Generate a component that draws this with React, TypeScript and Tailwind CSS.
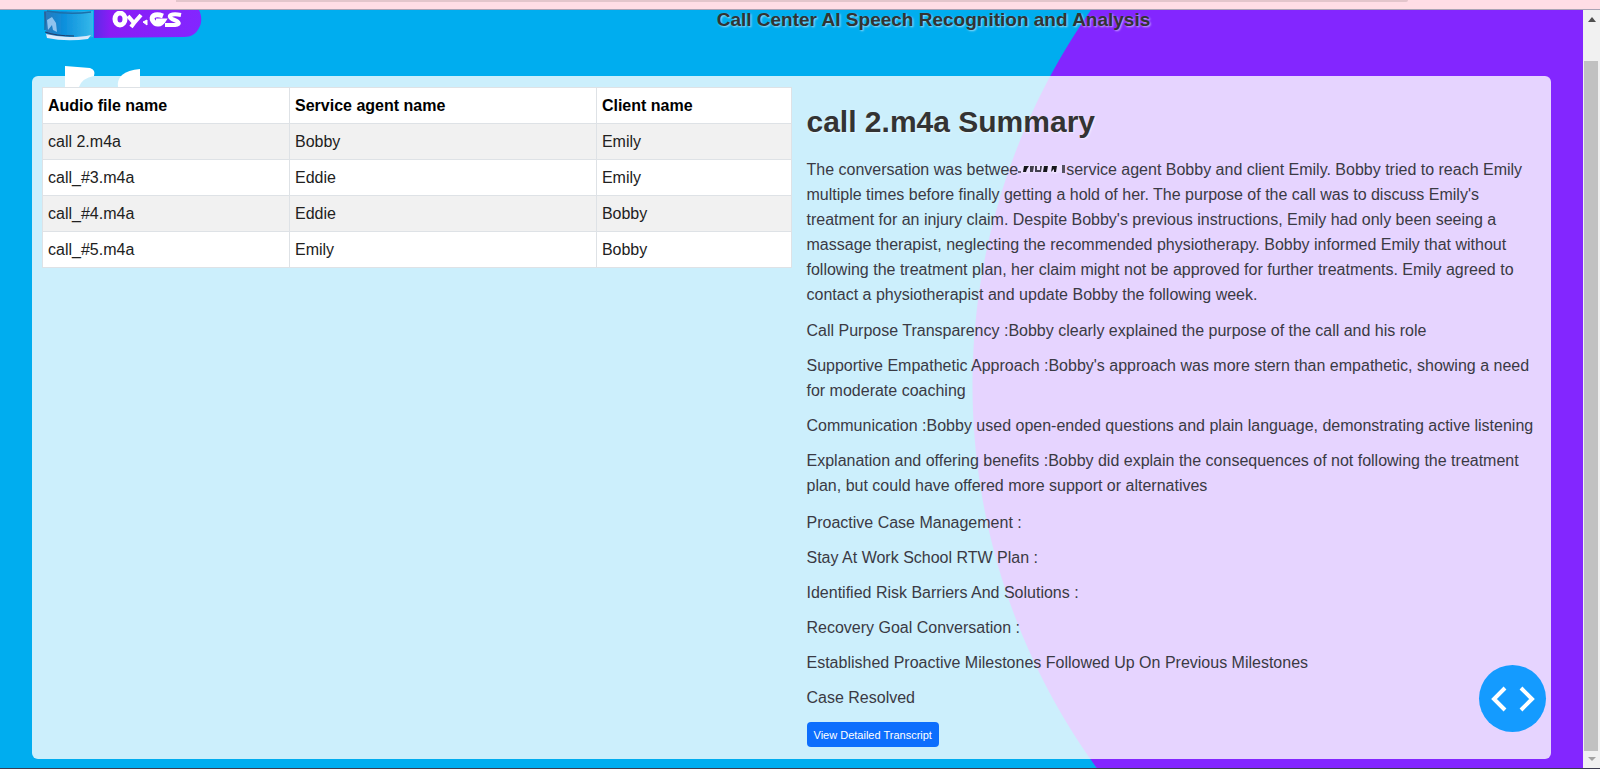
const calls = [
  { file: 'call 2.m4a', agent: 'Bobby', client: 'Emily' },
  { file: 'call_#3.m4a', agent: 'Eddie', client: 'Emily' },
  { file: 'call_#4.m4a', agent: 'Eddie', client: 'Bobby' },
  { file: 'call_#5.m4a', agent: 'Emily', client: 'Bobby' },
];

const reviewed = [
  'Call Purpose Transparency :Bobby clearly explained the purpose of the call and his role',
  "Supportive Empathetic Approach :Bobby's approach was more stern than empathetic, showing a need for moderate coaching",
  'Communication :Bobby used open-ended questions and plain language, demonstrating active listening',
  'Explanation and offering benefits :Bobby did explain the consequences of not following the treatment plan, but could have offered more support or alternatives',
];

const pending = [
  'Proactive Case Management :',
  'Stay At Work School RTW Plan :',
  'Identified Risk Barriers And Solutions :',
  'Recovery Goal Conversation :',
  'Established Proactive Milestones Followed Up On Previous Milestones',
  'Case Resolved',
];

function Logo() {
  return (
    <svg className="h-8 w-40 shrink-0" viewBox="0 0 160 32" aria-hidden="true">
      <defs>
        <linearGradient id="pill" x1="0" x2="1">
          <stop offset="0" stopColor="#5b2be8" />
          <stop offset="0.15" stopColor="#8a1cf5" />
          <stop offset="1" stopColor="#8326ff" />
        </linearGradient>
        <linearGradient id="glass" x1="0" x2="1">
          <stop offset="0" stopColor="#2b76b8" />
          <stop offset="0.4" stopColor="#0d8fdc" />
          <stop offset="1" stopColor="#35b9ea" />
        </linearGradient>
        <filter id="soft">
          <feGaussianBlur stdDeviation="0.5" />
        </filter>
      </defs>
      <g filter="url(#soft)">
        <path d="M0 1H49V27Q26 31 3 28Z" fill="url(#glass)" />
        <path d="M2 24Q14 27 26 27Q38 27 47 25L44 29Q22 32 3 28Z" fill="#d9e9fa" />
        <path d="M1 22Q12 26 30 26" fill="none" stroke="#223a66" strokeWidth="1" />
        <path d="M3 10L8 7L12 13L13 22L9 20L8 15L4 20Z" fill="#8fc3ee" />
        <path d="M1 2V20" stroke="#2c4f7c" strokeWidth="1" />
        <path d="M3 1Q25 5 47 2" fill="none" stroke="#1f6fa8" strokeWidth="1.5" />
      </g>
      <path d="M50 0H155C158 6 158 13 155 18C152 24 147 27 140 27L50 28Z" fill="url(#pill)" />
      <g fill="none" stroke="#fff" filter="url(#soft)">
        <ellipse cx="76" cy="9" rx="5" ry="6" strokeWidth="5" />
        <path d="M84 6L90 13L97 5M90 13L87 17" strokeWidth="4" />
        <path d="M119 6C111 3 106 6 109 11C112 16 117 14 119 11H112" strokeWidth="5" />
        <path d="M137 5C127 3 123 6 128 9C134 11 138 14 131 15H121" strokeWidth="4" />
        <path d="M99 12L103 10V15Z" fill="#fff" />
      </g>
    </svg>
  );
}

function Smudge() {
  return (
    <svg className="inline-block h-3 w-12 align-baseline" viewBox="0 0 48 12" aria-hidden="true">
      <defs>
        <filter id="smear">
          <feGaussianBlur stdDeviation="0.5" />
        </filter>
      </defs>
      <g filter="url(#smear)">
        <path d="M0 4L6 2H46V8L38 11L22 9L8 11L0 9Z" fill="#fff" opacity=".25" />
        <g fill="#18181f">
          <path d="M0 8H3V10H0Z" opacity=".6" />
          <path d="M6 3H11L9 6L8 9H5Z" />
          <path d="M12 3H16L15 9H12Z" opacity=".8" />
          <path d="M17 3H19V7H22V3H24L23 9H17Z" opacity=".8" />
          <path d="M26 3H30L29 9H25Z" />
          <path d="M34 3H39L38 9H36L36 6L33 9Z" />
          <path d="M44 2H47V10H44Z" opacity=".7" />
        </g>
      </g>
    </svg>
  );
}

function ScrollRail() {
  return (
    <div className="flex w-[17px] shrink-0 flex-col bg-[#f1f1f1]" aria-hidden="true">
      <svg className="h-[51px] w-full shrink-0" viewBox="0 0 17 51">
        <path d="M5 12H13L9 7Z" fill="#505050" />
      </svg>
      <div className="mx-px mr-0.5 flex-1 bg-[#c1c1c1]" />
      <svg className="h-[17px] w-full shrink-0" viewBox="0 0 17 17">
        <path d="M5 6H13L9 10Z" fill="#a3a3a3" />
      </svg>
    </div>
  );
}

export default function App() {
  return (
    <div className="flex min-h-screen flex-col border-b border-[#3c3c50] bg-[#ffdde5] font-['Liberation_Sans',Arial,sans-serif] text-base text-[#333]">
      <div className="flex h-2.5 shrink-0 flex-col border-b border-[#a9a3b4]" aria-hidden="true">
        <div className="mr-48 ml-44 h-0.5 rounded-br bg-[#e3c5cb]" />
      </div>
      <div className="flex flex-1">
        <div className="relative flex min-w-0 flex-1 flex-col bg-[radial-gradient(circle_at_calc(100%_+_42px)_375px,#8326ff_652px,#00adef_653px)] px-8 pb-[9px]">
          <header className="flex h-[66px] shrink-0 items-start pl-3">
            <Logo />
            <h1 className="mr-[-32px] ml-20 flex-1 text-center text-[19px] leading-5 font-bold [text-shadow:1px_1px_2px_rgba(255,255,255,0.6)]">
              Call Center AI Speech Recognition and Analysis
            </h1>
          </header>
          <svg className="absolute top-14 left-[65px] h-[21px] w-[75px]" viewBox="0 0 75 21" aria-hidden="true">
            <path d="M0 0L25 2Q31 4 29 10Q17 12 14 21H0Z" fill="#fff" />
            <path d="M75 3V21H53Q52 14 57 9Q63 4 75 3Z" fill="#fff" />
          </svg>
          <main className="flex flex-1 items-start rounded-md bg-white/80 p-2.5">
            <div className="w-1/2 pt-px">
              <table className="w-full table-fixed border-collapse bg-white text-left text-black">
                <thead>
                  <tr className="h-9 border border-[#dee2e6]">
                    <th className="w-[33%] border-r border-[#dee2e6] px-[5px]">Audio file name</th>
                    <th className="w-[41%] border-r border-[#dee2e6] px-[5px]">Service agent name</th>
                    <th className="px-[5px]">Client name</th>
                  </tr>
                </thead>
                <tbody className="text-[#212121]">
                  {calls.map((c) => (
                    <tr key={c.file} className="h-9 border border-[#dee2e6] odd:bg-[#f1f1f1]">
                      <td className="border-r border-[#dee2e6] px-[5px]">{c.file}</td>
                      <td className="border-r border-[#dee2e6] px-[5px]">{c.agent}</td>
                      <td className="px-[5px]">{c.client}</td>
                    </tr>
                  ))}
                </tbody>
              </table>
            </div>
            <section className="flex w-1/2 flex-col items-start gap-[11px] pr-1 pl-[15px] leading-[25px] text-[#3a3a44]">
              <h2 className="mt-4 mb-1 text-[30px] leading-10 font-bold text-[#333] [text-shadow:1px_1px_2px_rgba(255,255,255,0.6)]">
                call 2.m4a Summary
              </h2>
              <p>
                The conversation was betwee
                <Smudge />
                service agent Bobby and client Emily. Bobby tried to reach Emily multiple times before finally getting a
                hold of her. The purpose of the call was to discuss Emily's treatment for an injury claim. Despite
                Bobby's previous instructions, Emily had only been seeing a massage therapist, neglecting the
                recommended physiotherapy. Bobby informed Emily that without following the treatment plan, her claim
                might not be approved for further treatments. Emily agreed to contact a physiotherapist and update Bobby
                the following week.
              </p>
              <div className="flex flex-col gap-2.5">
                {reviewed.map((text) => (
                  <p key={text}>{text}</p>
                ))}
              </div>
              <div className="mt-px flex flex-col gap-2.5">
                {pending.map((text) => (
                  <p key={text}>{text}</p>
                ))}
              </div>
              <button className="mt-px h-[25px] rounded bg-[#0d6efd] px-[7px] text-[11px] leading-4 text-white">
                View Detailed Transcript
              </button>
            </section>
          </main>
          <button
            aria-label="Show code"
            className="absolute right-[37px] bottom-[36px] flex size-[67px] items-center justify-center rounded-full bg-[#149bff]"
          >
            <svg className="h-7 w-11" viewBox="0 0 44 28" fill="none" stroke="#fff" strokeWidth="4" aria-hidden="true">
              <path d="M14 3L3 14L14 25M30 3L41 14L30 25" />
            </svg>
          </button>
        </div>
        <ScrollRail />
      </div>
    </div>
  );
}
